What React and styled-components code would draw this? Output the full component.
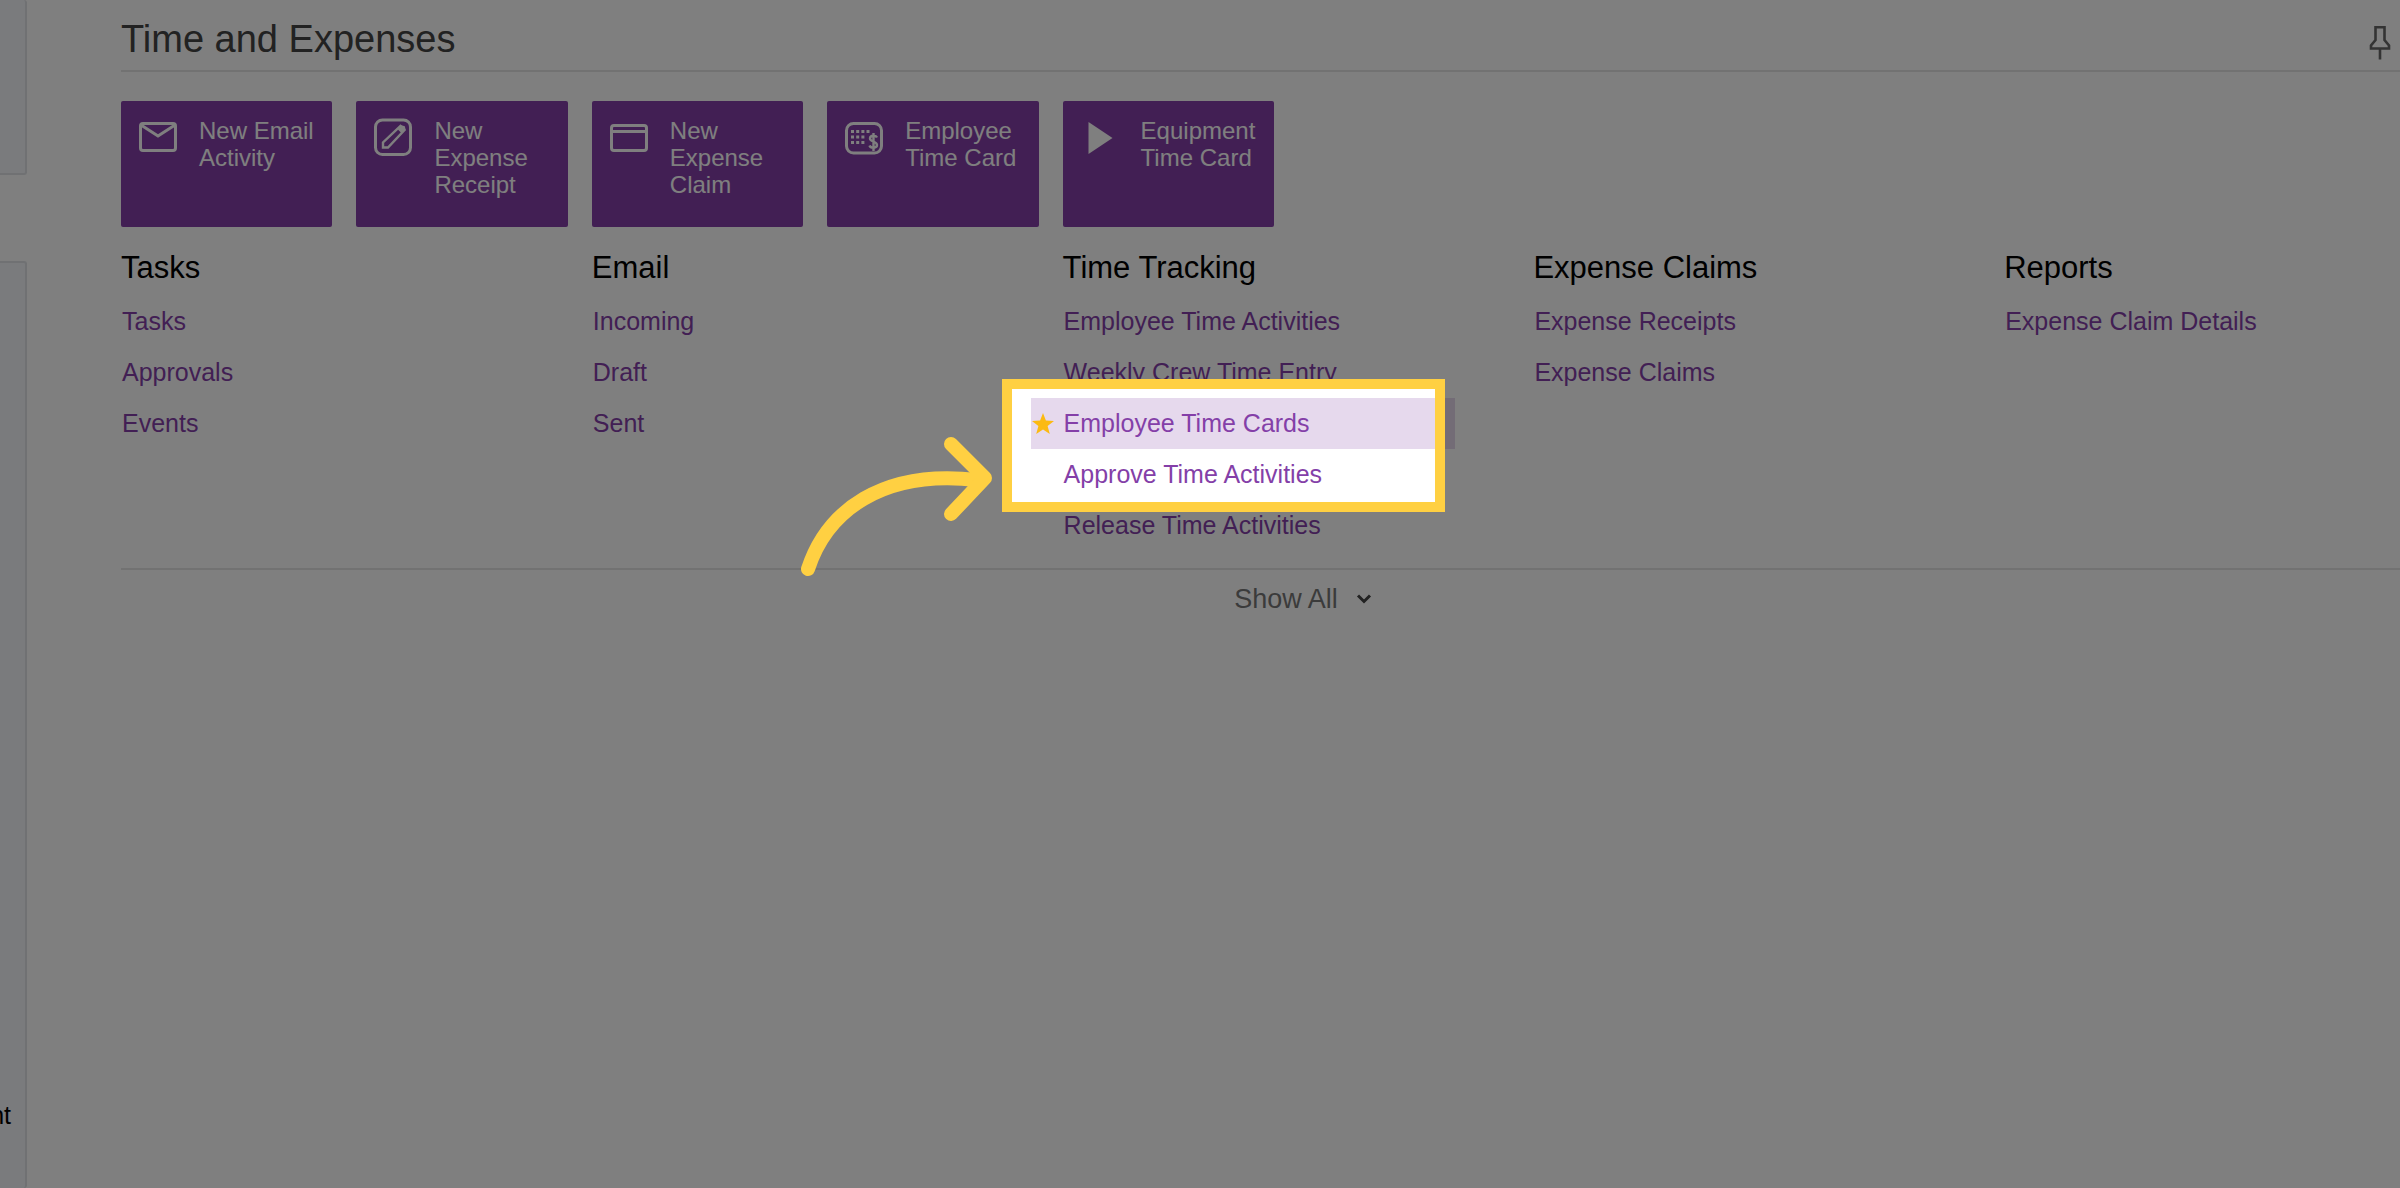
import React from "react";
import styled, { createGlobalStyle } from "styled-components";

const GlobalStyle = createGlobalStyle`
  *, *::before, *::after { box-sizing: border-box; }
  body {
    margin: 0;
    background: #fff;
    font-family: "Liberation Sans", Arial, sans-serif;
  }
`;

const purple = "#843fa8";
const yellow = "#ffd042";

const Page = styled.div`
  display: flex;
  min-height: 100vh;
  overflow: hidden;
  position: relative;
`;

const Sidebar = styled.aside`
  flex: none;
  width: 27px;
  display: flex;
  flex-direction: column;
  gap: 86px;
`;

const SidePanel = styled.div`
  display: flex;
  justify-content: flex-end;
  align-items: flex-end;
  overflow: hidden;
  background: #f4f7fb;
  border: 2px solid #e0e2e6;
  border-left: 0;
  border-radius: 0 3px 3px 0;
  font-size: 25px;
  line-height: 28px;
  color: #000;
  padding: 0 14px 59px 0;
  ${(p) => (p.$grow ? "flex: 1; border-bottom: 0;" : "height: 175px; border-top: 0;")}
`;

const Main = styled.main`
  flex: 1;
  min-width: 0;
  margin: 0 -75px 0 94px;
`;

const Header = styled.header`
  display: flex;
  justify-content: space-between;
  align-items: flex-start;
  padding: 17px 84px 9px 0;
  border-bottom: 2px solid #e4e4e4;
`;

const Title = styled.h1`
  margin: 0;
  font-size: 38px;
  line-height: 44px;
  font-weight: 400;
  color: #444;
`;

const PinButton = styled.button`
  display: flex;
  padding: 7px 0 0;
  border: 0;
  background: none;
  color: #666;
`;

const Tiles = styled.div`
  display: grid;
  grid-template-columns: repeat(10, 1fr);
  column-gap: 24px;
  margin: 29px 24px 0 0;
`;

const Tile = styled.button`
  display: flex;
  align-items: flex-start;
  gap: 20px;
  height: 126px;
  padding: 16px 0 0 16px;
  border: 0;
  border-radius: 2px;
  background: ${purple};
  color: #fff;
  font: inherit;
  font-size: 24px;
  line-height: 27px;
  text-align: left;
`;

const TileIcon = styled.svg`
  flex: none;
  width: 42px;
  height: 42px;
  fill: none;
  stroke: #fff;
  stroke-width: 3;
`;

const Columns = styled.div`
  display: grid;
  grid-template-columns: repeat(5, 1fr);
  padding: 23px 0 17px;
  border-bottom: 2px solid #e4e4e4;
`;

const ColumnTitle = styled.h2`
  margin: 0 0 10px;
  font-size: 31px;
  line-height: 36px;
  font-weight: 400;
  color: #000;
`;

const LinkList = styled.ul`
  list-style: none;
  margin: 0 78px 0 -32px;
  padding: 0;
`;

const LinkRow = styled.li`
  position: relative;
  display: grid;
  grid-template-columns: 33px 1fr;
  align-items: center;
  height: 51px;
  background: ${(p) => (p.$active ? "#e6d9ed" : "transparent")};
`;

const RowLink = styled.a`
  grid-column: 2;
  font-size: 25px;
  line-height: 51px;
  color: ${purple};
  text-decoration: none;
  white-space: nowrap;
`;

const Star = styled.svg`
  grid-column: 1;
  grid-row: 1;
  width: 24px;
  height: 24px;
  fill: #fbba12;
`;

const Spotlight = styled.div`
  position: absolute;
  z-index: 10;
  top: -19px;
  left: -29px;
  right: 10px;
  height: 133px;
  border: 10px solid ${yellow};
  box-shadow: 0 0 0 4000px rgba(0, 0, 0, 0.5);
  pointer-events: none;
`;

const Arrow = styled.svg`
  position: absolute;
  top: 46px;
  right: 443px;
  width: 200px;
  height: 150px;
  fill: none;
  stroke: ${yellow};
  stroke-width: 14;
  stroke-linecap: round;
  stroke-linejoin: round;
`;

const Footer = styled.footer`
  display: flex;
  justify-content: center;
  padding: 13px 0 0 10px;
`;

const ShowAll = styled.button`
  display: flex;
  align-items: center;
  gap: 18px;
  padding: 0;
  border: 0;
  background: none;
  font: inherit;
  font-size: 27px;
  line-height: 32px;
  color: #777;
`;

const tiles = [
  {
    label: "New Email Activity",
    icon: (
      <>
        <rect x="3.5" y="6.5" width="35" height="27" rx="2.5" />
        <path d="M4 8 21 19 38 8" />
      </>
    ),
  },
  {
    label: "New Expense Receipt",
    icon: (
      <>
        <rect x="3.5" y="3" width="35" height="34.5" rx="7" />
        <path strokeWidth="2.4" d="M11 30.5V25.500L28.500 9l4 4L16 30.500zM26 11l4.500 4.500" />
        <path fill="#fff" stroke="none" d="M26 11l3.500-2.800 3.300 1 .8 3-3 3.500z" />
      </>
    ),
  },
  {
    label: "New Expense Claim",
    icon: (
      <>
        <rect x="3.5" y="8.500" width="35" height="25" rx="2.5" />
        <path d="M4 14.500H38" />
      </>
    ),
  },
  {
    label: "Employee Time Card",
    icon: (
      <>
        <rect x="3.5" y="6.500" width="35" height="29.500" rx="7" />
        <g fill="#fff" stroke="none">
          {[13, 18.5, 24].map((y) =>
            [8, 13.2, 18.4].map((x) => <rect key={`${x}-${y}`} x={x} y={y} width="3" height="3" />)
          )}
          <rect x="23.5" y="13" width="3" height="3" />
        </g>
        <path
          strokeWidth="2.400"
          d="M34 20.500C33 18 27 18 27 21.500 27 25 34 24 34 28 34 31.500 27.500 31.500 26.500 28.500M30.500 16V34"
        />
      </>
    ),
  },
  {
    label: "Equipment Time Card",
    icon: <path fill="#fff" stroke="none" d="M9.500 5 33.500 21 9.500 37z" />,
  },
];

const columns = [
  { title: "Tasks", links: ["Tasks", "Approvals", "Events"] },
  { title: "Email", links: ["Incoming", "Draft", "Sent"] },
  {
    title: "Time Tracking",
    active: "Employee Time Cards",
    links: [
      "Employee Time Activities",
      "Weekly Crew Time Entry",
      "Employee Time Cards",
      "Approve Time Activities",
      "Release Time Activities",
    ],
  },
  { title: "Expense Claims", links: ["Expense Receipts", "Expense Claims"] },
  { title: "Reports", links: ["Expense Claim Details"] },
];

function Highlight() {
  return (
    <Spotlight>
      <Arrow viewBox="0 0 200 150" aria-hidden="true">
        <path d="M16 134C35 76 90 34 185 45" />
        <path d="M159 9 193 43 159 79" />
      </Arrow>
    </Spotlight>
  );
}

export default function App() {
  return (
    <>
      <GlobalStyle />
      <Page>
        <Sidebar>
          <SidePanel />
          <SidePanel $grow>nt</SidePanel>
        </Sidebar>
        <Main>
          <Header>
            <Title>Time and Expenses</Title>
            <PinButton type="button" aria-label="Pin">
              <svg width="22" height="36" viewBox="0 0 22 36" fill="none" stroke="currentColor" strokeWidth="2.6">
                <path d="M6.500 3.300H15.500V16L20 21.500V24.500H2V21.500L6.500 16zM11 25V35.500" />
              </svg>
            </PinButton>
          </Header>
          <Tiles>
            {tiles.map((t) => (
              <Tile key={t.label} type="button">
                <TileIcon viewBox="0 0 42 42" aria-hidden="true">
                  {t.icon}
                </TileIcon>
                <span>{t.label}</span>
              </Tile>
            ))}
          </Tiles>
          <Columns>
            {columns.map((c) => (
              <section key={c.title}>
                <ColumnTitle>{c.title}</ColumnTitle>
                <LinkList>
                  {c.links.map((label) => (
                    <LinkRow key={label} $active={label === c.active}>
                      {label === c.active && (
                        <Star viewBox="0 0 24 24" aria-hidden="true">
                          <path d="M12 1 14.900 8.600 23 9 16.600 14 18.800 22 12 17.500 5.200 22 7.400 14 1 9 9.100 8.600z" />
                        </Star>
                      )}
                      <RowLink href="#">{label}</RowLink>
                      {label === c.active && <Highlight />}
                    </LinkRow>
                  ))}
                </LinkList>
              </section>
            ))}
          </Columns>
          <Footer>
            <ShowAll type="button">
              Show All
              <svg width="16" height="12" viewBox="0 0 16 12" fill="none" stroke="#444" strokeWidth="3">
                <path d="M2 2.500 8 8.500 14 2.500" />
              </svg>
            </ShowAll>
          </Footer>
        </Main>
      </Page>
    </>
  );
}
